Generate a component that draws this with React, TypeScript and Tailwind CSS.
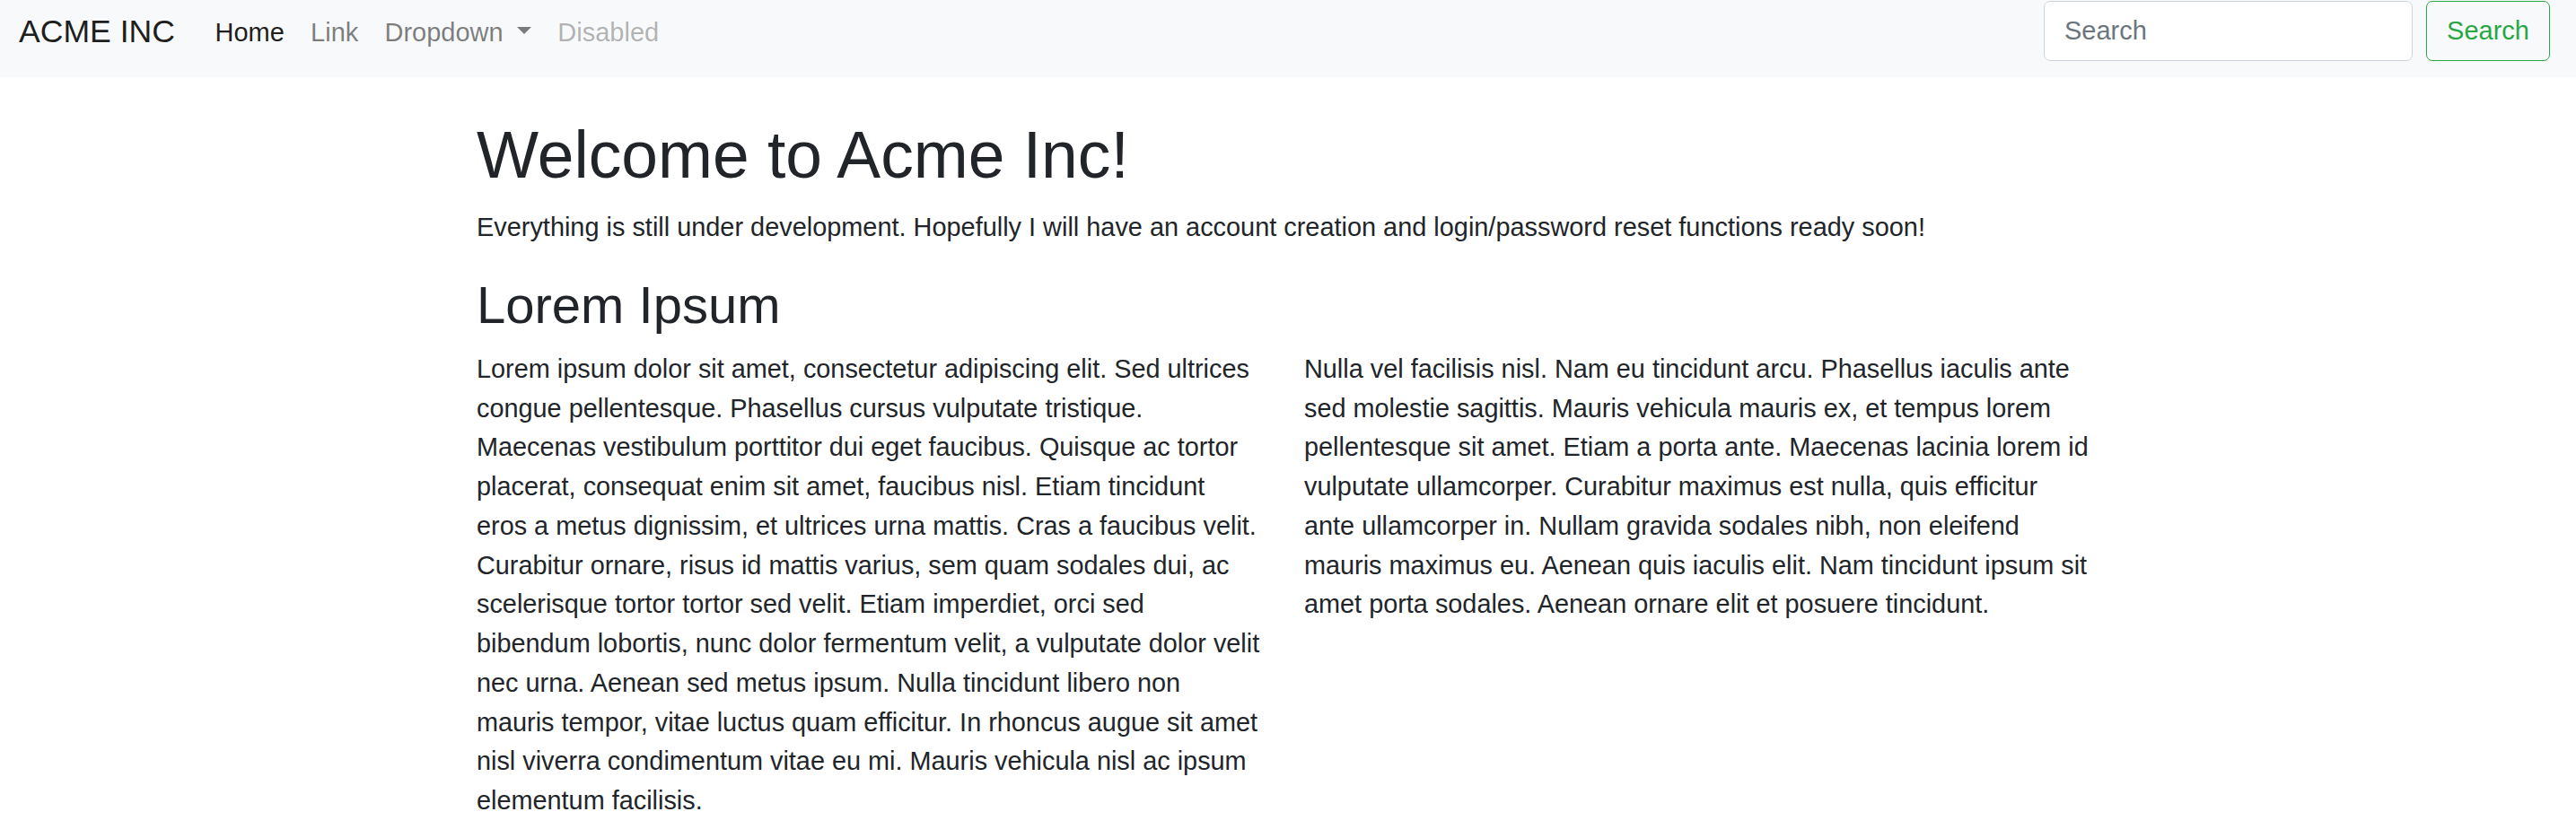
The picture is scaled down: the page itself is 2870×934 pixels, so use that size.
import React from 'react';

const leftLines = [
  'Lorem ipsum dolor sit amet, consectetur adipiscing elit. Sed ultrices',
  'congue pellentesque. Phasellus cursus vulputate tristique.',
  'Maecenas vestibulum porttitor dui eget faucibus. Quisque ac tortor',
  'placerat, consequat enim sit amet, faucibus nisl. Etiam tincidunt',
  'eros a metus dignissim, et ultrices urna mattis. Cras a faucibus velit.',
  'Curabitur ornare, risus id mattis varius, sem quam sodales dui, ac',
  'scelerisque tortor tortor sed velit. Etiam imperdiet, orci sed',
  'bibendum lobortis, nunc dolor fermentum velit, a vulputate dolor velit',
  'nec urna. Aenean sed metus ipsum. Nulla tincidunt libero non',
  'mauris tempor, vitae luctus quam efficitur. In rhoncus augue sit amet',
  'nisl viverra condimentum vitae eu mi. Mauris vehicula nisl ac ipsum',
  'elementum facilisis.',
];

const rightLines = [
  'Nulla vel facilisis nisl. Nam eu tincidunt arcu. Phasellus iaculis ante',
  'sed molestie sagittis. Mauris vehicula mauris ex, et tempus lorem',
  'pellentesque sit amet. Etiam a porta ante. Maecenas lacinia lorem id',
  'vulputate ullamcorper. Curabitur maximus est nulla, quis efficitur',
  'ante ullamcorper in. Nullam gravida sodales nibh, non eleifend',
  'mauris maximus eu. Aenean quis iaculis elit. Nam tincidunt ipsum sit',
  'amet porta sodales. Aenean ornare elit et posuere tincidunt.',
];

function Paragraph({ lines }: { lines: string[] }) {
  return (
    <p className="text-[28.85px] leading-[43.75px]">
      {lines.map((line) => (
        <span key={line} className="block whitespace-nowrap">
          {line}
        </span>
      ))}
    </p>
  );
}

function Navbar() {
  return (
    <nav className="h-[86px] bg-[#f8f9fa] flex items-start justify-between pl-[21px] pr-[29px]">
      <div className="flex items-start">
        <a href="#" className="pt-[9px] text-[35.6px] leading-[1.5] text-black/90 whitespace-nowrap">
          ACME INC
        </a>
        <ul className="flex ml-[30px] text-[29px] leading-[43.75px]">
          <li>
            <a href="#" className="block px-[14.6px] py-[14.6px] text-black/90">
              Home
            </a>
          </li>
          <li>
            <a href="#" className="block px-[14.6px] py-[14.6px] text-black/50">
              Link
            </a>
          </li>
          <li>
            <a href="#" className="block px-[14.6px] py-[14.6px] text-black/50 whitespace-nowrap">
              Dropdown{' '}
              <span className="inline-block ml-[0.255em] align-[0.255em] w-0 h-0 border-t-[0.3em] border-x-[0.3em] border-b-0 border-t-current border-x-transparent" />
            </a>
          </li>
          <li>
            <span className="block px-[14.6px] py-[14.6px] text-black/30">Disabled</span>
          </li>
        </ul>
      </div>
      <form className="flex items-center pt-[1px]" onSubmit={(e) => e.preventDefault()}>
        <input
          type="search"
          placeholder="Search"
          className="w-[411px] h-[67px] px-[22px] bg-white border border-[#ced4da] rounded-[7px] text-[29px] text-[#495057] placeholder:text-[#6c757d] outline-none"
        />
        <button
          type="submit"
          className="ml-[15px] w-[138px] h-[67px] border border-[#28a745] rounded-[7px] text-[29px] text-[#28a745]"
        >
          Search
        </button>
      </form>
    </nav>
  );
}

export default function App() {
  return (
    <div className="min-h-screen bg-white text-[#212529] font-['Liberation_Sans',Arial,sans-serif]">
      <Navbar />
      <main className="pl-[531px] pt-[43.7px]">
        <h1 className="text-[73.2px] leading-[1.2] mb-[14.6px]">Welcome to Acme Inc!</h1>
        <p className="text-[28.9px] leading-[43.75px] mb-[29.3px]">
          Everything is still under development. Hopefully I will have an account creation and
          login/password reset functions ready soon!
        </p>
        <h2 className="text-[58px] leading-[1.2] mb-[15px]">Lorem Ipsum</h2>
        <div className="grid grid-cols-[880px_880px] gap-x-[42px]">
          <Paragraph lines={leftLines} />
          <Paragraph lines={rightLines} />
        </div>
      </main>
    </div>
  );
}
